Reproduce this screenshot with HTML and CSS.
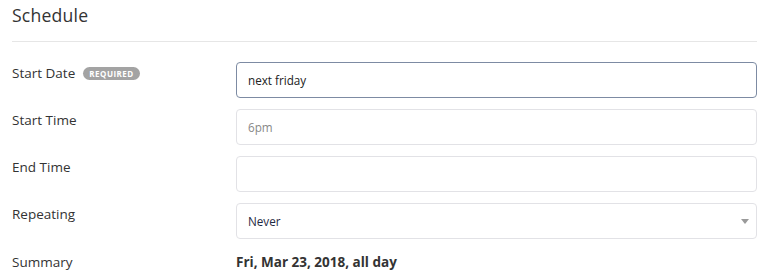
FILE: index.html
```html
<!DOCTYPE html>
<html>
<head>
<meta charset="utf-8">
<link rel="stylesheet" href="styles.css">
</head>
<body>
<div class="panel">
  <h2 class="title">Schedule</h2>
  <div class="divider"></div>
  <div class="form">
    <div class="row">
      <div class="label">Start Date <span class="badge">REQUIRED</span></div>
      <div class="field focused">next friday</div>
    </div>
    <div class="row">
      <div class="label">Start Time</div>
      <div class="field placeholder">6pm</div>
    </div>
    <div class="row">
      <div class="label">End Time</div>
      <div class="field"></div>
    </div>
    <div class="row">
      <div class="label">Repeating</div>
      <div class="field select">Never<span class="caret"></span></div>
    </div>
    <div class="row summary">
      <div class="label">Summary</div>
      <div class="value">Fri, Mar 23, 2018, all day</div>
    </div>
  </div>
</div>
</body>
</html>
```

FILE: styles.css
```css
html, body {
  margin: 0;
  padding: 0;
  background: #ffffff;
}
body {
  font-family: "Open Sans", "Liberation Sans", sans-serif;
  color: #333;
}
.panel {
  padding: 0 18px 0 12px;
}
.title {
  margin: 0;
  padding-top: 4px;
  font-size: 17.6px;
  font-weight: 400;
  line-height: 22px;
  color: #333;
  letter-spacing: 0.2px;
}
.divider {
  height: 1px;
  background: #e6e6e6;
  margin-top: 15px;
  margin-bottom: 20px;
}
.form {
  display: flex;
  flex-direction: column;
  gap: 11px;
}
.row {
  display: grid;
  grid-template-columns: 224px 1fr;
  align-items: start;
}
.label {
  font-size: 13.5px;
  line-height: 18px;
  color: #333;
  padding-top: 2px;
  display: flex;
  align-items: center;
  gap: 8px;
}
.badge {
  display: inline-block;
  background: #a3a3a3;
  color: #fff;
  font-size: 8px;
  font-weight: 700;
  letter-spacing: 0.5px;
  line-height: 13px;
  padding: 0 6px;
  border-radius: 7px;
}
.field {
  height: 34px;
  border: 1px solid #e2e2e6;
  border-radius: 4px;
  box-sizing: content-box;
  font-size: 11.7px;
  line-height: 34px;
  padding: 0 11px;
  color: #222;
  position: relative;
}
.field.focused {
  border-color: #7d8ba3;
}
.field.placeholder {
  color: #888;
}
.select {
  color: #1f2a44;
}
.caret {
  position: absolute;
  right: 7px;
  top: 15px;
  width: 0;
  height: 0;
  border-left: 4px solid transparent;
  border-right: 4px solid transparent;
  border-top: 5px solid #9a9a9a;
}
.summary .label {
  padding-top: 0;
}
.summary .value {
  font-size: 13.5px;
  font-weight: 700;
  color: #333;
  line-height: 18px;
}
.summary {
  margin-top: 3px;
}
```
